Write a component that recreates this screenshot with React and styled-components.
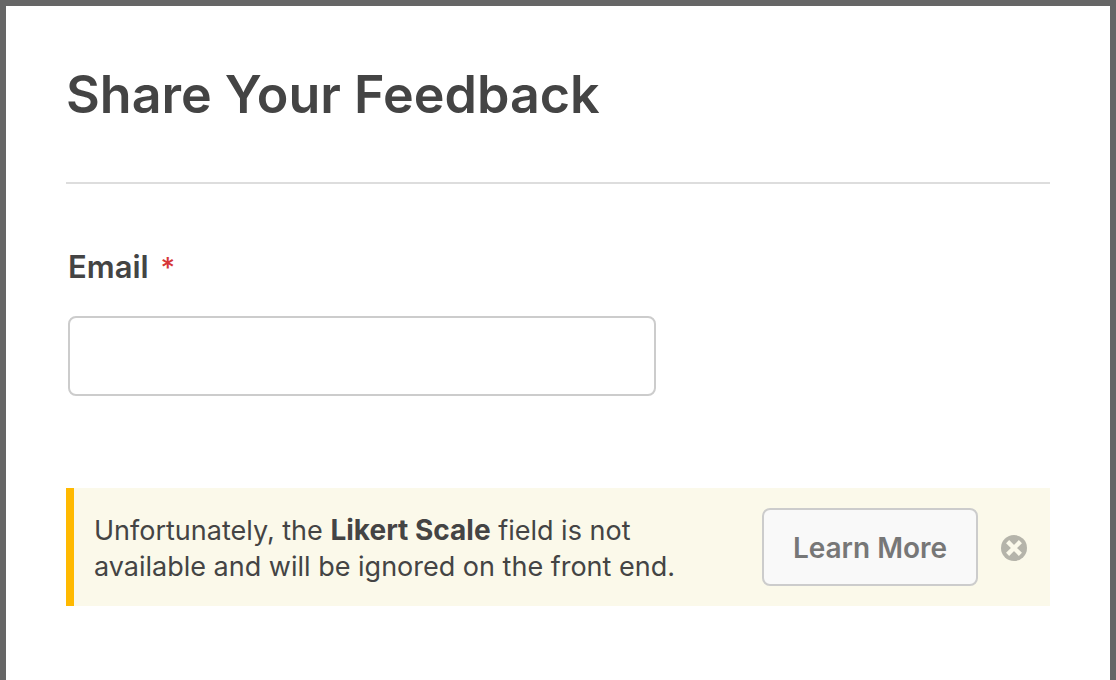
import React from 'react';
import styled, { createGlobalStyle } from 'styled-components';

const GlobalStyle = createGlobalStyle`
  * {
    box-sizing: border-box;
  }

  body {
    margin: 0;
    background: #666;
    color: #444;
    font-family: Inter, 'Liberation Sans', sans-serif;
  }
`;

const Panel = styled.main`
  min-height: 100vh;
  margin: 0 6px;
  padding: 60px;
  border-top: 6px solid #666;
  background: #fff;
`;

const Title = styled.h1`
  margin: 0;
  padding-bottom: 58px;
  border-bottom: 2px solid #ddd;
  font-size: 52px;
  font-weight: 600;
  line-height: 58px;
`;

const Field = styled.div`
  display: flex;
  flex-direction: column;
  align-items: flex-start;
  gap: 28px;
  padding: 62px 2px 92px;
`;

const Label = styled.label`
  font-size: 31px;
  font-weight: 600;
  line-height: 42px;
`;

const Required = styled.span`
  margin-left: 4px;
  color: #d63638;
  font-size: 28px;
  font-weight: 500;
  line-height: 1;
`;

const TextInput = styled.input`
  width: 60%;
  height: 80px;
  padding: 0 20px;
  border: 2px solid #ccc;
  border-radius: 8px;
  background: #fff;
  color: inherit;
  font: inherit;
  font-size: 28px;
`;

const Notice = styled.section`
  display: flex;
  align-items: center;
  gap: 23px;
  padding: 20px 23px 20px 20px;
  border-left: 8px solid #ffb900;
  background: #fbf9ea;
`;

const Message = styled.p`
  flex: 1;
  max-width: 620px;
  margin: 0 auto 0 0;
  padding-top: 4px;
  font-size: 27px;
  line-height: 36px;

  strong {
    font-size: 28px;
    line-height: 1;
  }
`;

const LearnMore = styled.button`
  width: 216px;
  height: 78px;
  padding: 2px 0 0;
  border: 2px solid #ccc;
  border-radius: 8px;
  background: #f9f9f9;
  color: #777;
  font: inherit;
  font-size: 28px;
  font-weight: 600;
`;

const Dismiss = styled.button`
  display: flex;
  padding: 2px 0 0;
  border: 0;
  background: none;
  color: #b5b4aa;
`;

const App = () => (
  <>
    <GlobalStyle />
    <Panel>
      <Title>Share Your Feedback</Title>
      <Field>
        <Label htmlFor="email">
          Email <Required>*</Required>
        </Label>
        <TextInput id="email" type="email" required />
      </Field>
      <Notice>
        <Message>
          Unfortunately, the <strong>Likert Scale</strong> field is not available and will be ignored on the front end.
        </Message>
        <LearnMore type="button">Learn More</LearnMore>
        <Dismiss type="button" aria-label="Dismiss">
          <svg width="26" height="26" viewBox="0 0 26 26" aria-hidden="true">
            <circle cx="13" cy="13" r="13" fill="currentColor" />
            <path d="M6.6 6.6l12.8 12.8M19.4 6.6L6.6 19.4" stroke="#fbf9ea" strokeWidth="4.4" />
          </svg>
        </Dismiss>
      </Notice>
    </Panel>
  </>
);

export default App;
